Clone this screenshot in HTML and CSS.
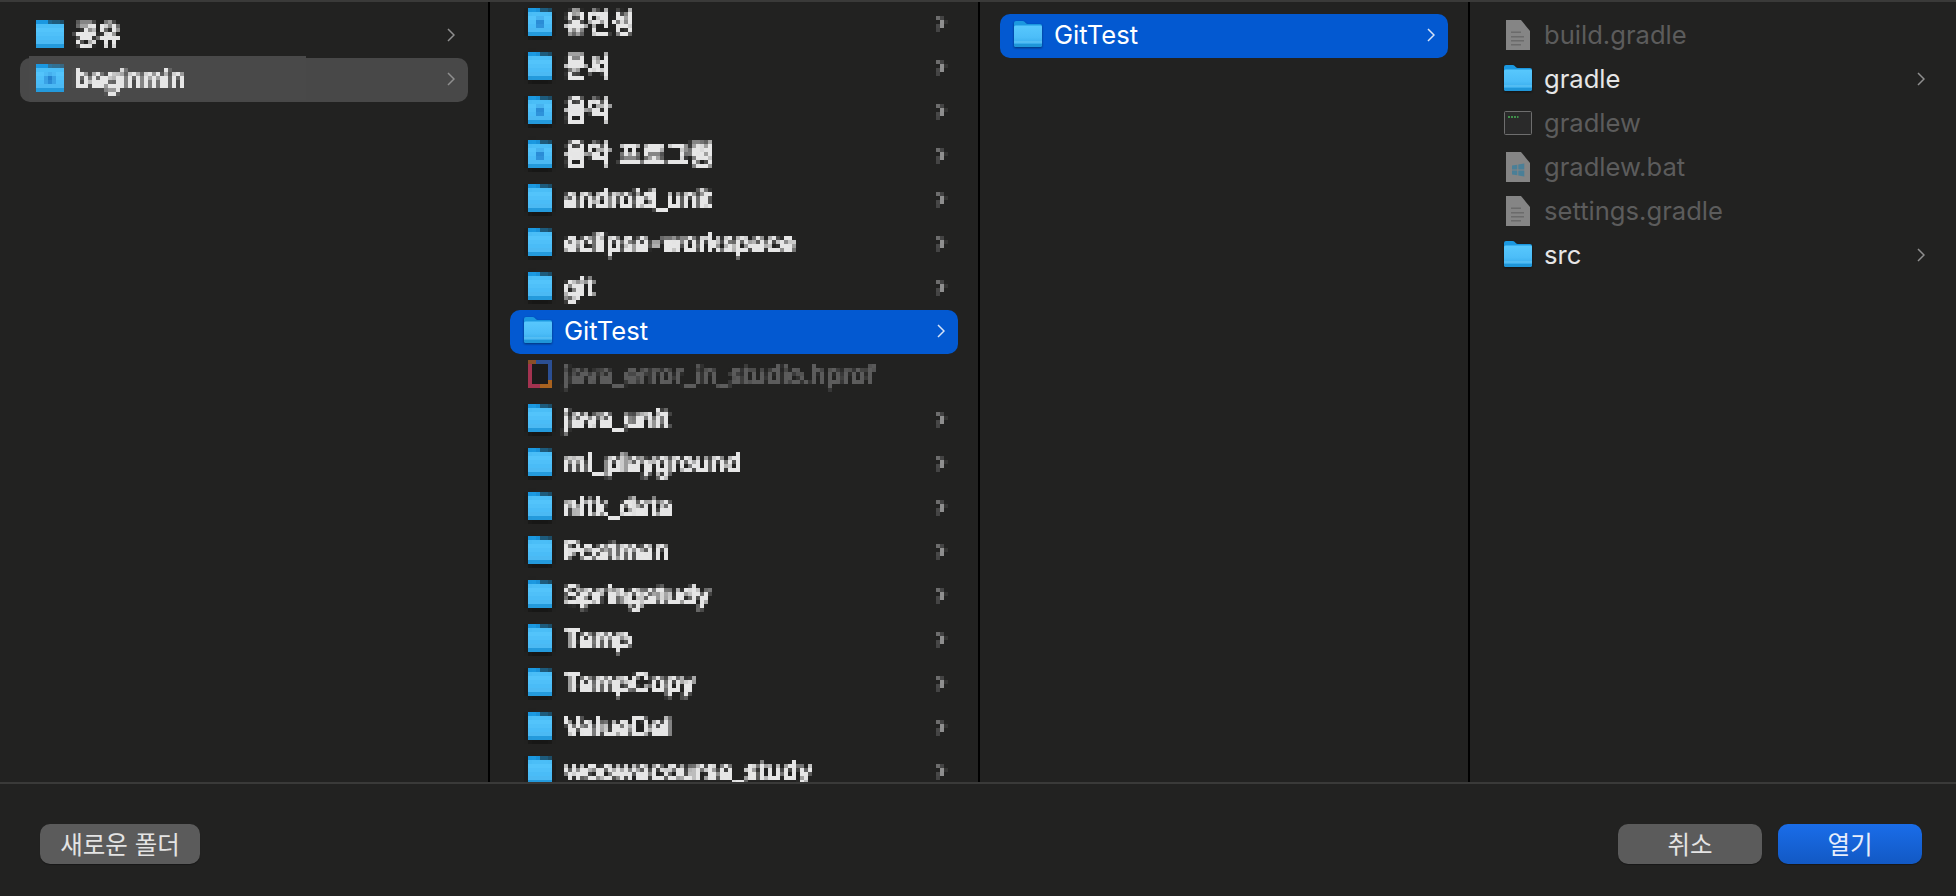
FILE: index.html
```html
<!DOCTYPE html>
<html lang="ko">
<head>
<meta charset="utf-8">
<title>열기</title>
<link rel="stylesheet" href="styles.css">
</head>
<body>
<svg class="defs" width="0" height="0" aria-hidden="true">
  <defs>
    <filter id="px-a" x="0" y="0" width="100%" height="100%" primitiveUnits="userSpaceOnUse" color-interpolation-filters="sRGB">
      <feConvolveMatrix in="SourceGraphic" order="4" kernelMatrix="1 1 1 1 1 1 1 1 1 1 1 1 1 1 1 1" divisor="16" targetX="1" targetY="1" edgeMode="none"/>
      <feComponentTransfer result="avg"><feFuncA type="linear" slope="2.600"/></feComponentTransfer>
      <feFlood x="1" y="3" width="1" height="1" flood-color="#000"/>
      <feComposite x="0" y="2" width="4" height="4"/>
      <feTile result="dots"/>
      <feComposite in="avg" in2="dots" operator="in"/>
      <feConvolveMatrix order="4" kernelMatrix="1 1 1 1 1 1 1 1 1 1 1 1 1 1 1 1" divisor="1" edgeMode="none"/>
    </filter>
    <filter id="px-b" x="0" y="0" width="100%" height="100%" primitiveUnits="userSpaceOnUse" color-interpolation-filters="sRGB">
      <feConvolveMatrix in="SourceGraphic" order="4" kernelMatrix="1 1 1 1 1 1 1 1 1 1 1 1 1 1 1 1" divisor="16" targetX="1" targetY="1" edgeMode="none"/>
      <feComponentTransfer result="avg"><feFuncA type="linear" slope="2.600"/></feComponentTransfer>
      <feFlood x="3" y="3" width="1" height="1" flood-color="#000"/>
      <feComposite x="2" y="2" width="4" height="4"/>
      <feTile result="dots"/>
      <feComposite in="avg" in2="dots" operator="in"/>
      <feConvolveMatrix order="4" kernelMatrix="1 1 1 1 1 1 1 1 1 1 1 1 1 1 1 1" divisor="1" edgeMode="none"/>
    </filter>
    <linearGradient id="fold" x1="0" y1="0" x2="0" y2="1">
      <stop offset="0" stop-color="#58c8fd"/>
      <stop offset="0.55" stop-color="#4cbdf8"/>
      <stop offset="1" stop-color="#2ea4e6"/>
    </linearGradient>
    <symbol id="folder" viewBox="0 0 28 26" preserveAspectRatio="none">
      <path fill="#1b98e0" d="M0 2a2 2 0 0 1 2-2h6.500c1 0 1.700.4 2.300 1l1.200 1.200c.5.5 1 .8 1.800.8H26a2 2 0 0 1 2 2v18a2 2 0 0 1-2 2H2a2 2 0 0 1-2-2z"/>
      <path fill="url(#fold)" d="M0 6a1.500 1.500 0 0 1 1.500-1.500h25A1.500 1.500 0 0 1 28 6v18a2 2 0 0 1-2 2H2a2 2 0 0 1-2-2z"/>
      <rect y="20.500" width="28" height="1" fill="#7cd3fa" opacity=".7"/>
      <path fill="#1f96d8" d="M0 23h28v1a2 2 0 0 1-2 2H2a2 2 0 0 1-2-2z"/>
    </symbol>
    <symbol id="folder-mark" viewBox="0 0 28 26" preserveAspectRatio="none">
      <use href="#folder" width="28" height="26"/>
      <rect x="10" y="10" width="8" height="8" fill="#2483d0"/>
    </symbol>
    <symbol id="doc" viewBox="0 0 24 30">
      <path fill="#858585" d="M0 0h15l9 11v19H0z"/>
      <path fill="#6b6b6b" d="M5 11.500h10v1.600H5zM5 16h13v1.600H5zM5 20h13v1.600H5zM5 24h10v1.600H5z"/>
    </symbol>
    <symbol id="doc-win" viewBox="0 0 24 30">
      <path fill="#858585" d="M0 0h15l9 11v19H0z"/>
      <path fill="#4a7f97" d="M6 13.500l5.300-.8v4.800H6zM12.300 12.500l6-1v6h-6zM6 18.500h5.300v4.800L6 22.500zM12.300 18.500h6v6l-6-1z"/>
    </symbol>
    <symbol id="term" viewBox="0 0 28 24">
      <rect x=".5" y=".5" width="27" height="23" rx="1" fill="#2a2a2a" stroke="#6e6e6e"/>
      <path fill="#3f8f4a" d="M4 5h2v2H4zM7 5h2v2H7zM10 5h2v2h-2zM13 5h1.500v2H13z"/>
    </symbol>
    <symbol id="hprof" viewBox="0 0 24 28">
      <rect width="24" height="28" fill="#1b1b1b"/>
      <path fill="#a33350" d="M0 4h4v24H0zM4 24h8v4H4z"/>
      <path fill="#8a4f28" d="M0 0h8v4H0z"/>
      <path fill="#2b4f94" d="M8 0h16v4H8zM20 4h4v16h-4z"/>
      <path fill="#a8621f" d="M12 24h12v4H12zM20 20h4v4h-4z"/>
    </symbol>
    <symbol id="chev" viewBox="0 0 8 14">
      <path d="M1 1l6 6-6 6" fill="none" stroke="currentColor" stroke-width="1.500"/>
    </symbol>
  </defs>
</svg>

<div class="dialog">
  <main class="browser">
    <section class="col col-a">
      <div class="row mosaic"><div class="cells"><svg class="ico folder"><use href="#folder"/></svg><span class="name">공유</span></div><svg class="chev"><use href="#chev"/></svg></div>
      <div class="row mosaic current patched"><div class="cells"><svg class="ico folder"><use href="#folder-mark"/></svg><span class="name">beginmin</span></div><svg class="chev"><use href="#chev"/></svg></div>
    </section>

    <section class="col col-b">
      <div class="row mosaic"><div class="cells"><svg class="ico folder"><use href="#folder-mark"/></svg><span class="name">유연성</span></div><svg class="chev"><use href="#chev"/></svg></div>
      <div class="row mosaic"><div class="cells"><svg class="ico folder"><use href="#folder"/></svg><span class="name">문서</span></div><svg class="chev"><use href="#chev"/></svg></div>
      <div class="row mosaic"><div class="cells"><svg class="ico folder"><use href="#folder-mark"/></svg><span class="name">음악</span></div><svg class="chev"><use href="#chev"/></svg></div>
      <div class="row mosaic"><div class="cells"><svg class="ico folder"><use href="#folder-mark"/></svg><span class="name">음악 프로그램</span></div><svg class="chev"><use href="#chev"/></svg></div>
      <div class="row mosaic"><div class="cells"><svg class="ico folder"><use href="#folder"/></svg><span class="name">android_unit</span></div><svg class="chev"><use href="#chev"/></svg></div>
      <div class="row mosaic"><div class="cells"><svg class="ico folder"><use href="#folder"/></svg><span class="name">eclipse-workspace</span></div><svg class="chev"><use href="#chev"/></svg></div>
      <div class="row mosaic"><div class="cells"><svg class="ico folder"><use href="#folder"/></svg><span class="name">git</span></div><svg class="chev"><use href="#chev"/></svg></div>
      <div class="row selected"><div class="cells"><svg class="ico folder"><use href="#folder"/></svg><span class="name">GitTest</span></div><svg class="chev"><use href="#chev"/></svg></div>
      <div class="row mosaic dim"><div class="cells"><svg class="ico hprof"><use href="#hprof"/></svg><span class="name">java_error_in_studio.hprof</span></div></div>
      <div class="row mosaic"><div class="cells"><svg class="ico folder"><use href="#folder"/></svg><span class="name">java_unit</span></div><svg class="chev"><use href="#chev"/></svg></div>
      <div class="row mosaic"><div class="cells"><svg class="ico folder"><use href="#folder"/></svg><span class="name">ml_playground</span></div><svg class="chev"><use href="#chev"/></svg></div>
      <div class="row mosaic"><div class="cells"><svg class="ico folder"><use href="#folder"/></svg><span class="name">nltk_data</span></div><svg class="chev"><use href="#chev"/></svg></div>
      <div class="row mosaic"><div class="cells"><svg class="ico folder"><use href="#folder"/></svg><span class="name">Postman</span></div><svg class="chev"><use href="#chev"/></svg></div>
      <div class="row mosaic"><div class="cells"><svg class="ico folder"><use href="#folder"/></svg><span class="name">Springstudy</span></div><svg class="chev"><use href="#chev"/></svg></div>
      <div class="row mosaic"><div class="cells"><svg class="ico folder"><use href="#folder"/></svg><span class="name">Temp</span></div><svg class="chev"><use href="#chev"/></svg></div>
      <div class="row mosaic"><div class="cells"><svg class="ico folder"><use href="#folder"/></svg><span class="name">TempCopy</span></div><svg class="chev"><use href="#chev"/></svg></div>
      <div class="row mosaic"><div class="cells"><svg class="ico folder"><use href="#folder"/></svg><span class="name">ValueDel</span></div><svg class="chev"><use href="#chev"/></svg></div>
      <div class="row mosaic"><div class="cells"><svg class="ico folder"><use href="#folder"/></svg><span class="name">woowacourse_study</span></div><svg class="chev"><use href="#chev"/></svg></div>
    </section>

    <section class="col col-c">
      <div class="row selected"><div class="cells"><svg class="ico folder"><use href="#folder"/></svg><span class="name">GitTest</span></div><svg class="chev"><use href="#chev"/></svg></div>
    </section>

    <section class="col col-d">
      <div class="row dim"><div class="cells"><svg class="ico doc"><use href="#doc"/></svg><span class="name">build.gradle</span></div></div>
      <div class="row"><div class="cells"><svg class="ico folder"><use href="#folder"/></svg><span class="name">gradle</span></div><svg class="chev"><use href="#chev"/></svg></div>
      <div class="row dim"><div class="cells"><svg class="ico term"><use href="#term"/></svg><span class="name">gradlew</span></div></div>
      <div class="row dim"><div class="cells"><svg class="ico doc"><use href="#doc-win"/></svg><span class="name">gradlew.bat</span></div></div>
      <div class="row dim"><div class="cells"><svg class="ico doc"><use href="#doc"/></svg><span class="name">settings.gradle</span></div></div>
      <div class="row"><div class="cells"><svg class="ico folder"><use href="#folder"/></svg><span class="name">src</span></div><svg class="chev"><use href="#chev"/></svg></div>
    </section>
  </main>

  <footer class="actions">
    <button class="btn btn-new" type="button">새로운 폴더</button>
    <div class="actions-right">
      <button class="btn btn-side" type="button">취소</button>
      <button class="btn btn-side btn-primary" type="button">열기</button>
    </div>
  </footer>
</div>
</body>
</html>
```

FILE: styles.css
```css
* { box-sizing: border-box; }

html, body {
  margin: 0;
  height: 100%;
  background: #222221;
  overflow: hidden;
}

.defs { display: block; height: 0; }

.dialog {
  height: 896px;
  display: flex;
  flex-direction: column;
  border-top: 2px solid #3a3a39;
  font-family: Inter, "Noto Sans CJK KR", sans-serif;
}

.browser {
  flex: 1;
  min-height: 0;
  display: flex;
}

.col {
  width: 490px;
  flex: none;
  overflow: hidden;
  padding: 12px 20px 0 20px;
  border-right: 2px solid #000;
}

.col-b { padding-top: 0; }

.col-d {
  flex: 1;
  border-right: 0;
  padding-right: 18px;
}

.row {
  position: relative;
  height: 44px;
  border-radius: 10px;
  display: flex;
  align-items: center;
  padding-right: 13px;
  color: #e6e6e6;
}

.cells {
  position: relative;
  flex: 1;
  min-width: 0;
  height: 44px;
  display: flex;
  align-items: center;
  padding-left: 14px;
  font-size: 25.6px;
}

.col-a .cells { filter: url(#px-a); }
.col-b .mosaic { filter: url(#px-b); }

.current { background: #484848; }
.selected { background: #0359d1; color: #fff; }

.patched::before {
  content: "";
  position: absolute;
  left: 9px;
  top: -2px;
  width: 277px;
  height: 44px;
  background: #494949;
}

.ico {
  flex: none;
  display: block;
}

.folder {
  width: 28px;
  height: 26px;
  margin-top: -4px;
  filter: drop-shadow(0 1px 1px rgba(0, 0, 0, .45));
}

.col-a .folder {
  height: 28px;
  margin: -4px -2px 0 2px;
  filter: none;
}

.col-b .mosaic .folder {
  width: 24px;
  height: 28px;
  margin: -4px 0 0 4px;
}

.doc {
  width: 24px;
  height: 30px;
  margin: -2px 2px 0 2px;
}

.hprof {
  width: 24px;
  height: 28px;
  margin: -4px 0 0 4px;
}

.term {
  width: 28px;
  height: 24px;
  margin-top: -2px;
}

.name {
  flex: 1;
  margin-left: 12px;
  white-space: nowrap;
  line-height: 30px;
  margin-top: -2px;
}

.dim { color: #5c5c5c; }

.chev {
  flex: none;
  width: 8px;
  height: 14px;
  color: #8f8f8f;
  margin-top: -2px;
}

.selected .chev { color: #d5e3f8; }

.actions {
  flex: none;
  height: 114px;
  border-top: 2px solid #3a3a39;
  padding: 40px 34px 0 40px;
  display: flex;
  justify-content: space-between;
  align-items: flex-start;
}

.actions-right {
  display: flex;
  gap: 16px;
}

.btn {
  height: 40px;
  border: 0;
  border-radius: 10px;
  padding: 0 0 2px;
  background: #5b5b5b;
  color: #e4e4e4;
  font: 24.5px "Noto Sans CJK KR", sans-serif;
  box-shadow: 0 1px 1px rgba(0, 0, 0, .3);
}

.btn-new { width: 160px; }
.btn-side { width: 144px; }

.btn-primary {
  background: linear-gradient(#1a6de9, #1259c4);
  color: #e8eefb;
}
```
